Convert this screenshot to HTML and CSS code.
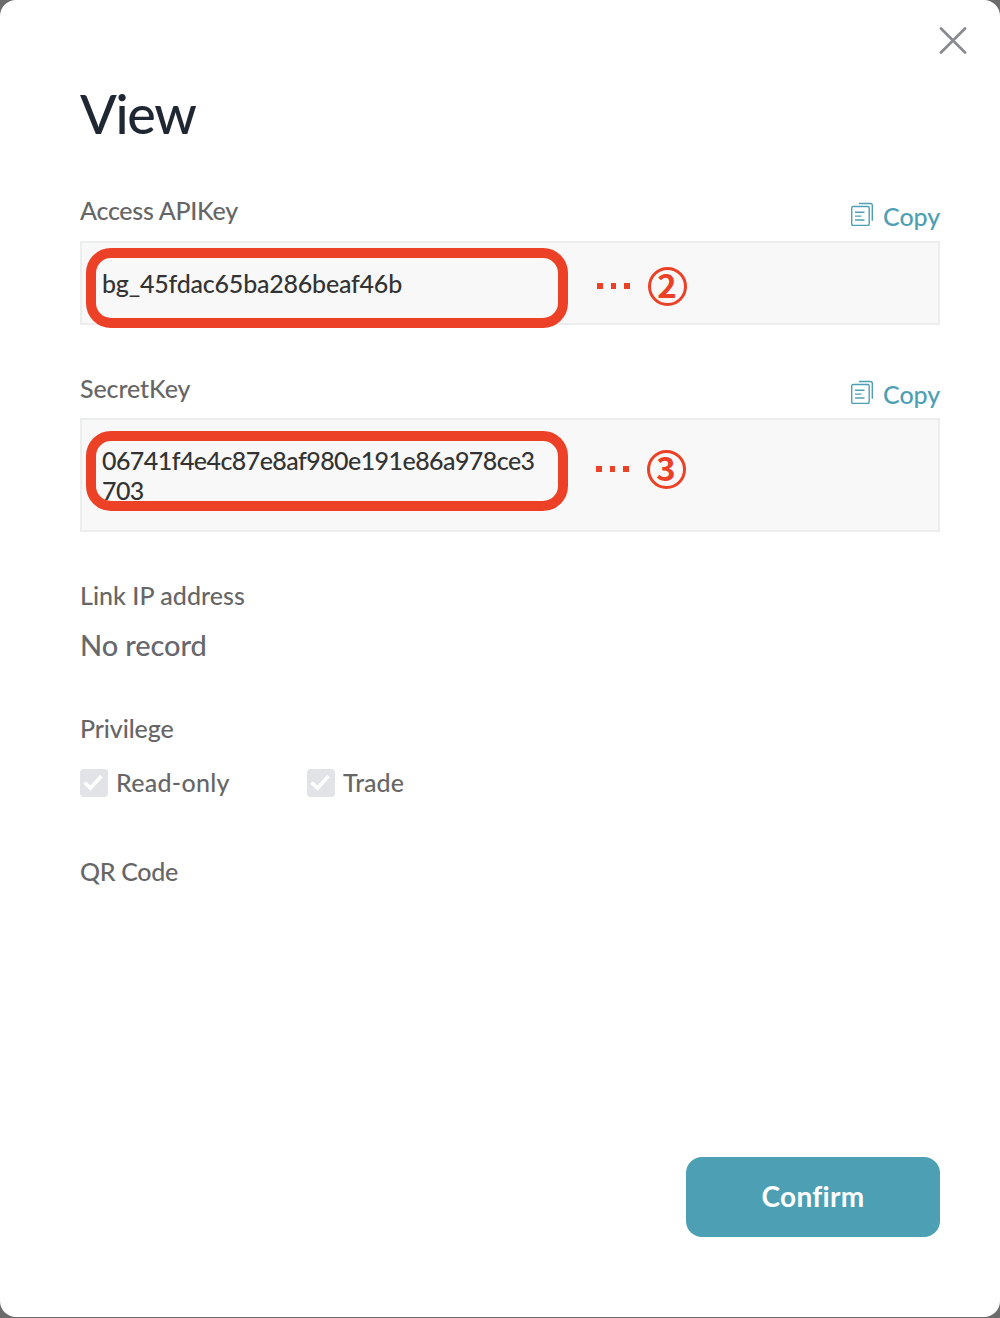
FILE: index.html
```html
<!DOCTYPE html>
<html lang="en">
<head>
<meta charset="utf-8">
<title>View API key</title>
<link rel="stylesheet" href="styles.css">
</head>
<body>
<main class="dialog">
  <button class="close" aria-label="Close">
    <svg width="28" height="28" viewBox="0 0 28 28" fill="none" stroke="#8a8b91" stroke-width="2.7" stroke-linecap="round"><path d="M2 1.500l24 24M26 1.500L2 25.500"/></svg>
  </button>
  <h1 class="title"><span>View</span></h1>

  <section class="field">
    <div class="field-head">
      <span class="label l-access">Access APIKey</span>
      <a class="copy">
        <svg width="24" height="26" viewBox="0 0 24 26" fill="none" stroke="#4da0b3" stroke-width="1.4"><rect x="1.7" y="6.5" width="17.500" height="19" rx="1.5"/><path d="M9 3.500h11.500a1.8 1.8 0 0 1 1.8 1.8V20.800M5 12.300h9.500M5 16.100h6.500M5 20h9.500"/></svg>
        <span>Copy</span>
      </a>
    </div>
    <div class="box box-key">
      <span class="value v-key">bg_45fdac65ba286beaf46b</span>
      <div class="highlight highlight-key"></div>
      <div class="note note-key"><i></i><i></i><i></i><b>2</b></div>
    </div>
  </section>

  <section class="field field-secret">
    <div class="field-head">
      <span class="label l-secret">SecretKey</span>
      <a class="copy">
        <svg width="24" height="26" viewBox="0 0 24 26" fill="none" stroke="#4da0b3" stroke-width="1.4"><rect x="1.7" y="6.5" width="17.500" height="19" rx="1.5"/><path d="M9 3.500h11.500a1.8 1.8 0 0 1 1.8 1.8V20.800M5 12.300h9.500M5 16.100h6.500M5 20h9.500"/></svg>
        <span>Copy</span>
      </a>
    </div>
    <div class="box box-secret">
      <span class="value v-secret">06741f4e4c87e8af980e191e86a978ce3<br>703</span>
      <div class="highlight highlight-secret"></div>
      <div class="note note-secret"><i></i><i></i><i></i><b>3</b></div>
    </div>
  </section>

  <section class="info info-ip">
    <span class="label l-ip">Link IP address</span>
    <p class="record">No record</p>
  </section>

  <section class="info info-privilege">
    <span class="label l-priv">Privilege</span>
    <div class="checks">
      <span class="check"><svg width="28" height="28" viewBox="0 0 28 28"><rect width="28" height="28" rx="4" fill="#e1e3e6"/><path d="M4.5 13.5l6 5.7L21.500 6.900" fill="none" stroke="#fff" stroke-width="3.700"/></svg><span class="l-read">Read-only</span></span>
      <span class="check"><svg width="28" height="28" viewBox="0 0 28 28"><rect width="28" height="28" rx="4" fill="#e1e3e6"/><path d="M4.5 13.5l6 5.7L21.500 6.900" fill="none" stroke="#fff" stroke-width="3.700"/></svg><span class="l-trade">Trade</span></span>
    </div>
  </section>

  <section class="info info-qr"><span class="label l-qr">QR Code</span></section>

  <footer class="footer"><button class="confirm"><span>Confirm</span></button></footer>
</main>
</body>
</html>
```
FILE: styles.css
```css
* { box-sizing: border-box; }
body { margin: 0; background: #6b6b6b; font-family: Lato, "Noto Sans", sans-serif; font-size: 25px; font-variant-ligatures: none; color: #666; }
button { border: 0; padding: 0; background: none; font: inherit; }
svg { display: block; flex: none; }
.dialog { position: relative; display: flex; flex-direction: column; width: 1000px; height: 1317px; margin-bottom: 1px; padding: 84px 60px 80px 80px; background: #fff; border-radius: 16px; }
.close { position: absolute; top: 27px; right: 33px; }
.title { margin: 0; height: 64px; font-size: 54px; line-height: 60px; font-weight: 500; letter-spacing: -1.3px; color: #1f2733; }
.field { margin-top: 44px; }
.field-secret { margin-top: 45px; }
.field-head { display: flex; justify-content: space-between; height: 49px; }
.field-secret .field-head { height: 48px; }
.label { height: 38px; line-height: 36px; font-weight: 500; white-space: nowrap; }
.l-access { letter-spacing: -0.28px; }
.l-secret { letter-spacing: -0.1px; }
.l-ip { letter-spacing: 0.04px; }
.l-priv { letter-spacing: -0.1px; }
.l-qr { letter-spacing: -0.32px; }
.l-read { letter-spacing: 0.28px; }
.copy { display: flex; gap: 9.500px; padding-top: 8px; color: #4da0b3; font-weight: 500; }
.copy span { line-height: 32px; letter-spacing: -0.1px; }
.box { position: relative; border: 2px solid #ebeeed; background: #f8f8f8; padding: 25px 20px; color: #333; }
.box-key { height: 84px; }
.box-secret { height: 114px; }
.value { display: block; line-height: 30px; font-weight: 500; white-space: nowrap; }
.v-key { letter-spacing: -0.22px; }
.v-secret { letter-spacing: -0.57px; }
.highlight { position: absolute; left: 4px; width: 482px; height: 80px; border: 10px solid #ec4027; border-radius: 25px; }
.highlight-key { top: 5px; }
.highlight-secret { top: 11px; }
.note { position: absolute; display: flex; align-items: center; gap: 8px; height: 40px; color: #ec4027; }
.note-key { left: 515px; top: 23px; }
.note-secret { left: 514px; top: 29px; }
.note i { width: 5.500px; height: 5.500px; background: currentColor; }
.note b { width: 39px; height: 39px; margin: 1px 0 0 10px; border: 3px solid currentColor; border-radius: 50%; font: 700 33px/29px "Noto Sans CJK JP", sans-serif; text-align: center; }
.info { display: flex; flex-direction: column; }
.info-ip { margin-top: 45px; }
.record { height: 40px; margin: 10px 0 0; font-size: 29px; line-height: 39px; letter-spacing: -0.1px; color: #66686d; font-weight: 500; }
.info-privilege { margin-top: 45px; }
.checks { display: flex; height: 38px; margin-top: 16px; font-weight: 500; }
.check { display: flex; align-items: center; gap: 8px; width: 227px; }
.check span { padding-bottom: 2px; }
.info-qr { margin-top: 51px; }
.footer { display: flex; justify-content: flex-end; margin-top: auto; }
.confirm { width: 254px; height: 80px; padding-bottom: 3px; border-radius: 16px; background: #4da0b3; color: #fff; font-size: 28px; font-weight: 700; letter-spacing: 0.3px; }
```
